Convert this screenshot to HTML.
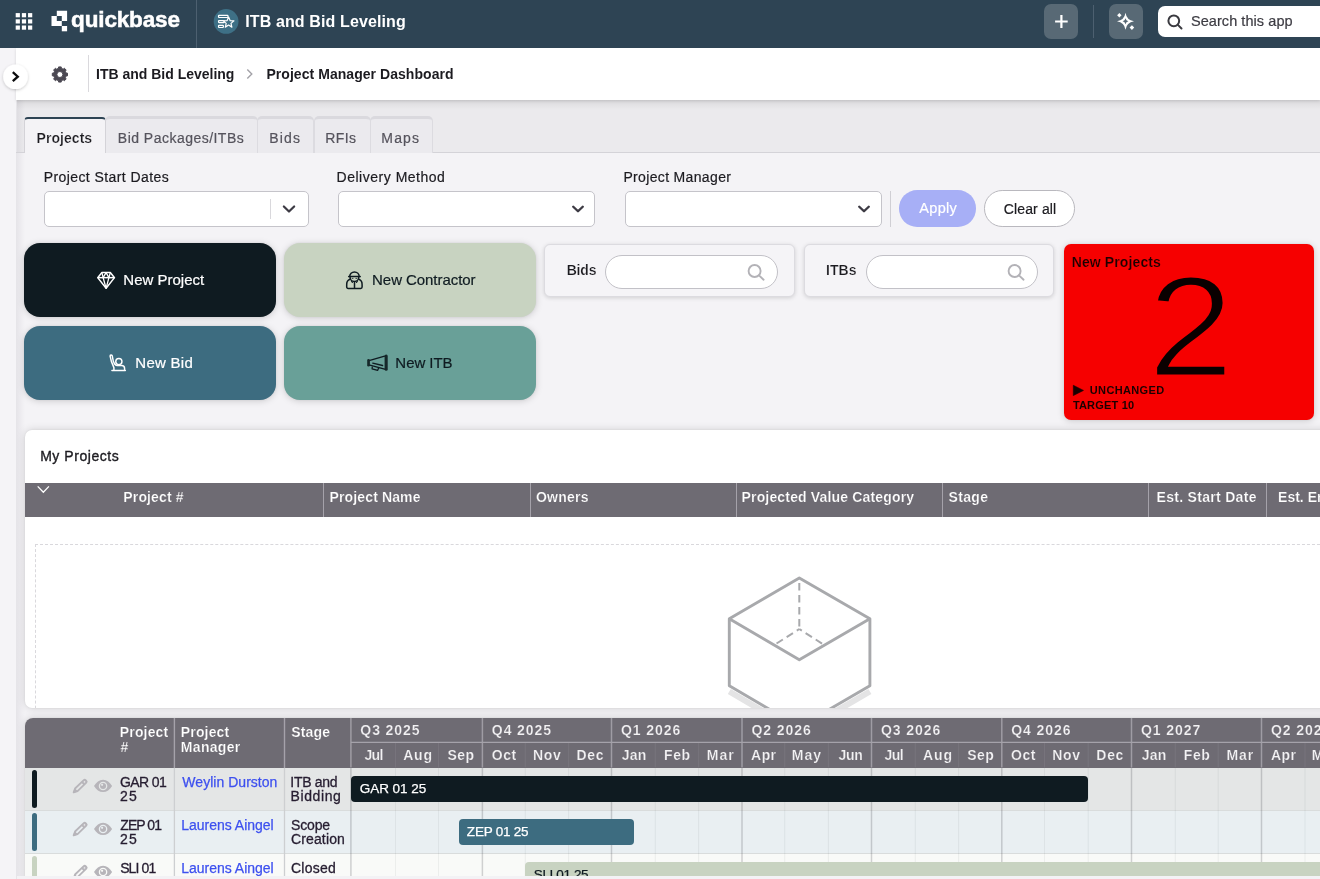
<!DOCTYPE html>
<html lang="en"><head><meta charset="utf-8"><title>Project Manager Dashboard</title>
<style>
*{box-sizing:border-box;margin:0;padding:0}
html,body{width:1320px;height:879px;overflow:hidden;background:#f4f3f6;font-family:"Liberation Sans", sans-serif;}
.g{position:absolute;left:0;top:0;width:0;height:0}
.a{position:absolute}
.t{position:absolute;white-space:pre;line-height:1;will-change:transform}
svg{position:absolute;overflow:visible}
</style></head>
<body>
<header id="app-header" class="g">
<div class="a" style="left:16px;top:100px;width:1304px;height:53px;background:#ebeaed"></div>
<div class="a" style="left:16px;top:100px;width:1304px;height:10px;background:linear-gradient(rgba(0,0,0,.07),rgba(0,0,0,0))"></div>
<div class="a" style="left:17px;top:100px;width:8px;height:779px;background:linear-gradient(90deg,rgba(20,10,40,.06),rgba(20,10,40,0))"></div>
<div class="a" style="left:0px;top:48px;width:17px;height:831px;background:#f5f4f7;border-right:1px solid #e6e5e9"></div>
<div class="a" style="left:16px;top:48px;width:1304px;height:52px;background:#fff;box-shadow:0 1px 3px rgba(0,0,0,.13)"></div>
<div class="a" style="left:0px;top:0px;width:1320px;height:48px;background:#2e4454"></div>
<svg style="left:0;top:0" width="200" height="48" fill="#fff"><rect x="15.70" y="13.10" width="4.2" height="4.2"/><rect x="15.70" y="19.30" width="4.2" height="4.2"/><rect x="15.70" y="25.50" width="4.2" height="4.2"/><rect x="21.87" y="13.10" width="4.2" height="4.2"/><rect x="21.87" y="19.30" width="4.2" height="4.2"/><rect x="21.87" y="25.50" width="4.2" height="4.2"/><rect x="28.04" y="13.10" width="4.2" height="4.2"/><rect x="28.04" y="19.30" width="4.2" height="4.2"/><rect x="28.04" y="25.50" width="4.2" height="4.2"/><path fill-rule="evenodd" d="M56.8 10.8H67.1V21.1H56.8Z M51.5 15.9H61.8V26H51.5Z"/><rect x="61.8" y="26" width="5.3" height="5.3"/></svg>
<div class="t" style="left:71px;top:8px;padding:0.75px 0 0 0.08px;font-size:22.5px;font-weight:700;color:#fff;letter-spacing:-0.145px;-webkit-text-stroke:.5px #fff;">quickbase</div>
<div class="a" style="left:196px;top:0px;width:1px;height:48px;background:#4d6070"></div>
<svg style="left:213px;top:8px" width="27" height="27"><circle cx="13.100" cy="13.450" r="12.400" fill="#3e7086"/><g fill="none" stroke="#fff" stroke-width="1.200"><rect x="5.550" y="7.300" width="9.400" height="2.200" rx=".5"/><rect x="5.550" y="12.600" width="5.900" height="2" rx=".5"/><rect x="5.550" y="17.300" width="4.800" height="2.200" rx=".5"/><path d="M15.60 9.00L17.07 12.58L20.93 12.87L17.98 15.37L18.89 19.13L15.60 17.10L12.31 19.13L13.22 15.37L10.27 12.87L14.13 12.58Z" fill="#3e7086" stroke-linejoin="round"/></g></svg>
<div class="t" style="left:245px;top:13px;padding:0.66px 0 0 0.23px;font-size:16px;font-weight:700;color:#fff;letter-spacing:0.121px;">ITB and Bid Leveling</div>
<div class="a" style="left:1043.6px;top:4px;width:34.5px;height:34.8px;background:#586975;border-radius:7px"></div>
<svg style="left:1043.5px;top:4px" width="35" height="35"><path d="M17.4 11v13M11.100 17.500h12.600" stroke="#fff" stroke-width="2.200" fill="none"/></svg>
<div class="a" style="left:1093px;top:5px;width:1px;height:33px;background:#4d6070"></div>
<div class="a" style="left:1108.8px;top:4px;width:34.5px;height:34.8px;background:#586975;border-radius:7px"></div>
<svg style="left:1108.1px;top:4px" width="35" height="35" fill="#fff"><path fill-rule="evenodd" transform="translate(17.5 17.25)" d="M0 -8.500Q1.100 -1.100 8.500 0Q1.100 1.100 0 8.500Q-1.100 1.100 -8.500 0Q-1.100 -1.100 0 -8.500Z M0 -2.900Q.5 -.5 2.900 0Q.5 .5 0 2.900Q-.5 .5 -2.900 0Q-.5 -.5 0 -2.900Z"/><path d="M11.350 8.900l2.200 2.250-2.200 2.250-2.200-2.250z"/><path d="M23.900 21.200l2.300 2.400-2.300 2.400-2.300-2.400z"/></svg>
<div class="a" style="left:1158px;top:6px;width:180px;height:31px;background:#fff;border-radius:7px"></div>
<svg style="left:1165px;top:12px" width="20" height="20" fill="none" stroke="#3a3a40" stroke-width="2"><circle cx="8.8" cy="8.800" r="5.4"/><path d="M12.900 12.900l3.600 3.600" stroke-linecap="round"/></svg>
<div class="t" style="left:1190px;top:13px;padding:0.83px 0 0 0.94px;font-size:14.5px;font-weight:400;color:#3c3b42;letter-spacing:0.065px;-webkit-text-stroke:.2px #3c3b42;">Search this app</div>
<svg style="left:0;top:60px" width="32" height="32"><defs><filter id="sh" x="-50%" y="-50%" width="200%" height="200%"><feDropShadow dx="0" dy="1" stdDeviation="1.5" flood-opacity=".22"/></filter></defs><circle cx="15.500" cy="16.800" r="12.300" fill="#fff" filter="url(#sh)"/><path d="M12.800 12.200l5 4.500-5 4.500" fill="none" stroke="#0c0c0e" stroke-width="2.300"/></svg>
<svg style="left:0;top:48px" width="100" height="52"><path fill-rule="evenodd" fill="#4b4852" stroke="#4b4852" stroke-width="1" stroke-linejoin="round" d="M67.49 25.18L67.49 27.82L66.03 27.97L65.27 29.79L66.20 30.93L64.33 32.80L63.19 31.87L61.37 32.63L61.22 34.09L58.58 34.09L58.43 32.63L56.61 31.87L55.47 32.80L53.60 30.93L54.53 29.79L53.77 27.97L52.31 27.82L52.31 25.18L53.77 25.03L54.53 23.21L53.60 22.07L55.47 20.20L56.61 21.13L58.43 20.37L58.58 18.91L61.22 18.91L61.37 20.37L63.19 21.13L64.33 20.20L66.20 22.07L65.27 23.21L66.03 25.03ZM62.90 26.50A3 3 0 1 0 56.90 26.50A3 3 0 1 0 62.90 26.50Z"/></svg>
<div class="a" style="left:88px;top:55px;width:1px;height:37px;background:#dad9dd"></div>
<div class="t" style="left:96px;top:66px;padding:0.75px 0 0 0.06px;font-size:14px;font-weight:700;color:#1c1b20;letter-spacing:-0.004px;">ITB and Bid Leveling</div>
<svg style="left:244px;top:68px" width="12" height="12"><path d="M3.300 1.500l4.500 4.500-4.500 4.500" fill="none" stroke="#a3a2a8" stroke-width="1.4"/></svg>
<div class="t" style="left:266px;top:66px;padding:0.75px 0 0 0.46px;font-size:14px;font-weight:700;color:#1c1b20;letter-spacing:0.047px;">Project Manager Dashboard</div>
</header>
<nav id="dashboard-filters" class="g">
<div class="a" style="left:16px;top:152px;width:1304px;height:1px;background:#d4d3d8"></div>
<div class="a" style="left:105px;top:116px;width:153.3px;height:37px;background:#ebeaee;border:1px solid #dcdbe0;border-top:3px solid #dad9de;border-bottom:none;border-radius:5px 5px 0 0"></div>
<div class="a" style="left:257.3px;top:116px;width:57.19999999999999px;height:37px;background:#ebeaee;border:1px solid #dcdbe0;border-top:3px solid #dad9de;border-bottom:none;border-radius:5px 5px 0 0"></div>
<div class="a" style="left:313.5px;top:116px;width:57.0px;height:37px;background:#ebeaee;border:1px solid #dcdbe0;border-top:3px solid #dad9de;border-bottom:none;border-radius:5px 5px 0 0"></div>
<div class="a" style="left:369.5px;top:116px;width:63.5px;height:37px;background:#ebeaee;border:1px solid #dcdbe0;border-top:3px solid #dad9de;border-bottom:none;border-radius:5px 5px 0 0"></div>
<div class="a" style="left:24px;top:117px;width:81.5px;height:36px;background:#f4f3f6;border:1px solid #d4d3d8;border-bottom:none;border-top:2px solid #2e4454;border-radius:4px 4px 0 0"></div>
<div class="t" style="left:36px;top:131px;padding:0.05px 0 0 0.56px;font-size:14px;font-weight:700;color:#1c1b20;letter-spacing:0.052px;-webkit-text-stroke:0.22px #f4f3f6;">Projects</div>
<div class="t" style="left:117px;top:131px;padding:0.05px 0 0 0.85px;font-size:14px;font-weight:400;color:#55535c;letter-spacing:0.474px;-webkit-text-stroke:.2px #55535c;">Bid Packages/ITBs</div>
<div class="t" style="left:269px;top:131px;padding:0.05px 0 0 0.35px;font-size:14px;font-weight:400;color:#55535c;letter-spacing:1.140px;-webkit-text-stroke:.2px #55535c;">Bids</div>
<div class="t" style="left:325px;top:131px;padding:0.05px 0 0 0.35px;font-size:14px;font-weight:400;color:#55535c;letter-spacing:0.368px;-webkit-text-stroke:.2px #55535c;">RFIs</div>
<div class="t" style="left:381px;top:131px;padding:0.05px 0 0 0.35px;font-size:14px;font-weight:400;color:#55535c;letter-spacing:1.140px;-webkit-text-stroke:.2px #55535c;">Maps</div>
<div class="t" style="left:43px;top:169px;padding:0.75px 0 0 0.65px;font-size:14px;font-weight:400;color:#1c1b20;letter-spacing:0.420px;-webkit-text-stroke:.2px #1c1b20;">Project Start Dates</div>
<div class="t" style="left:336px;top:169px;padding:0.75px 0 0 0.55px;font-size:14px;font-weight:400;color:#1c1b20;letter-spacing:0.514px;-webkit-text-stroke:.2px #1c1b20;">Delivery Method</div>
<div class="t" style="left:623px;top:169px;padding:0.75px 0 0 0.45px;font-size:14px;font-weight:400;color:#1c1b20;letter-spacing:0.340px;-webkit-text-stroke:.2px #1c1b20;">Project Manager</div>
<div class="a" style="left:44.3px;top:191px;width:264.7px;height:35.6px;background:#fff;border:1px solid #c5c4ca;border-radius:5px"></div>
<div class="a" style="left:337.5px;top:191px;width:257.6px;height:35.6px;background:#fff;border:1px solid #c5c4ca;border-radius:5px"></div>
<div class="a" style="left:624.5px;top:191px;width:257px;height:35.6px;background:#fff;border:1px solid #c5c4ca;border-radius:5px"></div>
<div class="a" style="left:270.3px;top:199px;width:1px;height:20px;background:#d9d8dc"></div>
<svg style="left:279.2px;top:198.6px" width="20" height="20"><path d="M4.85 7.45L10 12.55L15.15 7.45" fill="none" stroke="#3d3b44" stroke-width="2.2" stroke-linecap="round" stroke-linejoin="round"/></svg>
<svg style="left:568px;top:199.4px" width="20" height="20"><path d="M5.25 7.75L10 12.25L14.75 7.75" fill="none" stroke="#3d3b44" stroke-width="2.4" stroke-linecap="round" stroke-linejoin="round"/></svg>
<svg style="left:854.2px;top:199.4px" width="20" height="20"><path d="M5.25 7.75L10 12.25L14.75 7.75" fill="none" stroke="#3d3b44" stroke-width="2.4" stroke-linecap="round" stroke-linejoin="round"/></svg>
<div class="a" style="left:890px;top:191px;width:1px;height:36px;background:#d0cfd4"></div>
<div class="a" style="left:899.2px;top:190.3px;width:76.8px;height:36.4px;background:#a7aff6;border-radius:18.2px"></div>
<div class="t" style="left:919px;top:201px;padding:0.13px 0 0 0.27px;font-size:14.5px;font-weight:400;color:#fff;letter-spacing:0.321px;-webkit-text-stroke:.2px #fff;">Apply</div>
<div class="a" style="left:984px;top:190.3px;width:90.7px;height:36.4px;background:#fff;border:1px solid #b9b8be;border-radius:18.2px"></div>
<div class="t" style="left:1003px;top:201px;padding:0.55px 0 0 0.79px;font-size:14px;font-weight:400;color:#1c1b20;letter-spacing:0.137px;-webkit-text-stroke:.2px #1c1b20;">Clear all</div>
</nav>
<section id="dashboard-actions" class="g">
<div class="a" style="left:24px;top:243.2px;width:252px;height:73.8px;background:#0f1b21;border-radius:16px;box-shadow:0 1px 7px rgba(0,0,0,.17),0 0 2px rgba(0,0,0,.07)"></div>
<div class="a" style="left:284px;top:243.2px;width:252px;height:73.8px;background:#c8d3c1;border-radius:16px;box-shadow:0 1px 7px rgba(0,0,0,.17),0 0 2px rgba(0,0,0,.07)"></div>
<div class="a" style="left:24px;top:326px;width:252px;height:73.8px;background:#3d6c80;border-radius:16px;box-shadow:0 1px 7px rgba(0,0,0,.17),0 0 2px rgba(0,0,0,.07)"></div>
<div class="a" style="left:284px;top:326px;width:252px;height:73.8px;background:#69a098;border-radius:16px;box-shadow:0 1px 7px rgba(0,0,0,.17),0 0 2px rgba(0,0,0,.07)"></div>
<div class="t" style="left:123px;top:272px;padding:0.30px 0 0 0.37px;font-size:15px;font-weight:400;color:#fff;letter-spacing:-0.002px;-webkit-text-stroke:.2px #fff;">New Project</div>
<div class="t" style="left:372px;top:272px;padding:0.30px 0 0 0.07px;font-size:15px;font-weight:400;color:#0f1b21;letter-spacing:-0.056px;-webkit-text-stroke:.2px #0f1b21;">New Contractor</div>
<div class="t" style="left:135px;top:355px;padding:0.10px 0 0 0.37px;font-size:15px;font-weight:400;color:#fff;letter-spacing:0.257px;-webkit-text-stroke:.2px #fff;">New Bid</div>
<div class="t" style="left:395px;top:355px;padding:0.10px 0 0 0.37px;font-size:15px;font-weight:400;color:#0f1b21;letter-spacing:-0.048px;-webkit-text-stroke:.2px #0f1b21;">New ITB</div>
<svg style="left:97px;top:272px" width="19" height="18" fill="none" stroke="#fff" stroke-width="1.500" stroke-linejoin="round"><path d="M4.900 .6h8.400l4.200 5.050L9.100 16.300 .7 5.650z"/><path d="M.7 5.650h16.800"/><path d="M4.900 .6L6.100 5.650 9.100 16.300 11.900 5.650 13.300 .6" stroke-width="1.300"/><path d="M6.100 5.650L9.100 .6l2.800 5.050" stroke-width="1.300"/></svg>
<svg style="left:345px;top:271px" width="19" height="18" fill="none" stroke="#0f1b21" stroke-width="1.500" stroke-linejoin="round" stroke-linecap="round"><path d="M4.700 5.500A4.750 4.600 0 0 1 14.200 5.500"/><path d="M3.800 5.500H15.100" stroke-width="1.700"/><path d="M5.100 5.700v.5a4.300 4.300 0 0 0 8.600 0v-.5"/><path d="M4.900 8.300C2.800 9.100 1.700 10.900 1.700 13.400V16a1.400 1.400 0 0 0 1.400 1.400H15.700a1.400 1.400 0 0 0 1.400-1.400V13.400C17.100 10.900 16 9.100 13.900 8.300"/><path d="M9.500 10.700V17.200"/><path d="M6.500 10.100l.9 1.400M12.400 10.100l-.9 1.400" stroke-width="1.100"/><path d="M7.200 7.400h.8M10.900 7.400h.8" stroke-width=".8"/></svg>
<svg style="left:109px;top:354px" width="19" height="18" fill="none" stroke="#fff" stroke-width="1.450" stroke-linejoin="round" stroke-linecap="round"><path d="M4.900 16.300V13.600C3.200 10 1.600 6 1.100 2.200C1 .8 3 .5 3.300 2C3.800 6 4.600 8.500 5.600 10C6.200 10.900 6.900 11.400 8 11.500H12.600C14.600 11.500 15.600 12.800 15.600 14.400V16.300"/><path d="M3 16.500H16.300" stroke-width="1.600"/><circle cx="9.850" cy="7.600" r="3.100"/></svg>
<svg style="left:367px;top:354px" width="22" height="18" fill="none" stroke="#0f1b21" stroke-width="1.300" stroke-linejoin="round" stroke-linecap="round"><rect x="17.600" y=".6" width="3.100" height="16.200" rx="1.500" fill="#16282a" stroke="none"/><rect x=".2" y="5.100" width="2.700" height="7.400" rx="1.300" fill="#16282a" stroke="none"/><path d="M2.900 6.400L17.600 2.100M2.900 11.100L17.600 15.200M5.750 9.200L15.600 11.500M5.300 12.700L5.100 14.800L10.700 16.400L11.500 14.200"/></svg>
<div class="a" style="left:544.3px;top:243.5px;width:250.5px;height:53px;background:#f5f4f7;border:1px solid #dcdbe0;border-radius:6px;box-shadow:0 1px 4px rgba(0,0,0,.15)"></div>
<div class="a" style="left:803.7px;top:243.5px;width:250.8px;height:53px;background:#f5f4f7;border:1px solid #dcdbe0;border-radius:6px;box-shadow:0 1px 4px rgba(0,0,0,.15)"></div>
<div class="t" style="left:566px;top:262px;padding:0.55px 0 0 0.66px;font-size:14px;font-weight:700;color:#1c1b20;letter-spacing:-0.176px;-webkit-text-stroke:0.22px #f5f4f7;">Bids</div>
<div class="t" style="left:826px;top:262px;padding:0.55px 0 0 0.06px;font-size:14px;font-weight:700;color:#1c1b20;letter-spacing:0.058px;-webkit-text-stroke:0.22px #f5f4f7;">ITBs</div>
<div class="a" style="left:604.9px;top:254.8px;width:173.1px;height:34.7px;background:#fff;border:1px solid #c2c1c7;border-radius:17.5px"></div>
<div class="a" style="left:865.5px;top:254.8px;width:172.4px;height:34.7px;background:#fff;border:1px solid #c2c1c7;border-radius:17.5px"></div>
<svg style="left:746.3px;top:261.7px" width="20" height="20" fill="none" stroke="#b3b2b7" stroke-width="1.900"><circle cx="8.600" cy="9" r="6"/><path d="M13 13.400l4.600 4.300" stroke-linecap="round"/></svg>
<svg style="left:1006px;top:261.7px" width="20" height="20" fill="none" stroke="#b3b2b7" stroke-width="1.900"><circle cx="8.600" cy="9" r="6"/><path d="M13 13.400l4.600 4.300" stroke-linecap="round"/></svg>
<div class="a" style="left:1064.1px;top:243.5px;width:250.2px;height:176px;background:#f60000;border-radius:7px;box-shadow:0 1px 7px rgba(0,0,0,.17),0 0 2px rgba(0,0,0,.07)"></div>
<div class="t" style="left:1071px;top:255px;padding:0.25px 0 0 0.76px;font-size:14px;font-weight:700;color:#1c0000;letter-spacing:0.108px;-webkit-text-stroke:0.22px #f60000;">New Projects</div>
<div class="t" style="left:1150px;top:255px;padding:0.35px 0 0 0.81px;font-size:143px;font-weight:400;color:#0a0000;letter-spacing:0.000px;-webkit-text-stroke:3px #f60000;transform:scaleX(1.08);transform-origin:50% 50%;">2</div>
<svg style="left:1073.4px;top:384.700px" width="11" height="11"><path d="M.3 .3L10.500 5.400L.3 10.600z" fill="#1a0000" stroke="#1a0000" stroke-width=".6" stroke-linejoin="round"/></svg>
<div class="t" style="left:1089px;top:384px;padding:0.99px 0 0 0.84px;font-size:11px;font-weight:700;color:#1c0000;letter-spacing:0.353px;">UNCHANGED</div>
<div class="t" style="left:1072px;top:399px;padding:0.99px 0 0 0.88px;font-size:11px;font-weight:700;color:#1c0000;letter-spacing:0.198px;">TARGET 10</div>
</section>
<section id="my-projects" class="g">
<div class="a" style="left:25px;top:429.5px;width:1310px;height:278.5px;background:#fff;border-radius:7px;box-shadow:0 0 8px rgba(0,0,0,.15),0 0 2px rgba(0,0,0,.08)"></div>
<div class="t" style="left:40px;top:448px;padding:0.95px 0 0 0.15px;font-size:14px;font-weight:400;color:#1c1b20;letter-spacing:0.553px;-webkit-text-stroke:.35px #1c1b20;">My Projects</div>
<div class="a" style="left:25px;top:483px;width:1295px;height:34px;background:#6e6b73"></div>
<div class="a" style="left:323.0px;top:483px;width:1px;height:34px;background:#a5a2aa"></div>
<div class="a" style="left:529.5px;top:483px;width:1px;height:34px;background:#a5a2aa"></div>
<div class="a" style="left:736.0px;top:483px;width:1px;height:34px;background:#a5a2aa"></div>
<div class="a" style="left:942.0px;top:483px;width:1px;height:34px;background:#a5a2aa"></div>
<div class="a" style="left:1148.0px;top:483px;width:1px;height:34px;background:#a5a2aa"></div>
<div class="a" style="left:1265.5px;top:483px;width:1px;height:34px;background:#a5a2aa"></div>
<svg style="left:36px;top:484px" width="16" height="12"><path d="M1.700 2.400L7.350 8.300L12.900 2.400" fill="none" stroke="#fff" stroke-width="1.300"/></svg>
<div class="t" style="left:123px;top:489px;padding:0.95px 0 0 0.36px;font-size:14px;font-weight:700;color:#fff;letter-spacing:0.128px;-webkit-text-stroke:0.22px #6e6b73;">Project #</div>
<div class="t" style="left:329px;top:489px;padding:0.95px 0 0 0.56px;font-size:14px;font-weight:700;color:#fff;letter-spacing:0.130px;-webkit-text-stroke:0.22px #6e6b73;">Project Name</div>
<div class="t" style="left:535px;top:489px;padding:0.95px 0 0 0.93px;font-size:14px;font-weight:700;color:#fff;letter-spacing:0.259px;-webkit-text-stroke:0.22px #6e6b73;">Owners</div>
<div class="t" style="left:741px;top:489px;padding:0.95px 0 0 0.56px;font-size:14px;font-weight:700;color:#fff;letter-spacing:0.160px;-webkit-text-stroke:0.22px #6e6b73;">Projected Value Category</div>
<div class="t" style="left:948px;top:489px;padding:0.95px 0 0 0.60px;font-size:14px;font-weight:700;color:#fff;letter-spacing:0.314px;-webkit-text-stroke:0.22px #6e6b73;">Stage</div>
<div class="t" style="left:1156px;top:489px;padding:0.95px 0 0 0.56px;font-size:14px;font-weight:700;color:#fff;letter-spacing:0.301px;-webkit-text-stroke:0.22px #6e6b73;">Est. Start Date</div>
<div class="t" style="left:1278px;top:489px;padding:0.95px 0 0 0.06px;font-size:14px;font-weight:700;color:#fff;letter-spacing:0.014px;-webkit-text-stroke:0.22px #6e6b73;">Est. End Date</div>
<div class="a" style="left:0;top:0;width:1320px;height:708px;overflow:hidden">
<div class="a" style="left:35px;top:544px;width:1300px;height:200px;border:1px dashed #d9d8dc;border-right:none;border-bottom:none"></div>
<svg style="left:700px;top:560px" width="200" height="148" viewBox="700 560 200 148" fill="none"><path d="M729.3 691.500L799.3 732.500L869.900 691.500" stroke="#e4e4e5" stroke-width="6" stroke-linejoin="round" stroke-linecap="butt"/><path d="M799.3 577.900L869.900 618.800V685.800L799.3 726.800L729.3 685.800V618.800Z" stroke="#a8a9ac" stroke-width="2.900" stroke-linejoin="round" fill="#fff"/><path d="M729.3 618.800L799.3 659.800L869.900 618.800" stroke="#a8a9ac" stroke-width="2.900" stroke-linejoin="round"/><path d="M799.3 583V629" stroke="#a8a9ac" stroke-width="2" stroke-dasharray="7.500 4.500"/><path d="M799.3 629L775 644.500M799.3 629L823.500 644.500" stroke="#a8a9ac" stroke-width="2" stroke-dasharray="3 4.500 7.500 4.500 7.500 4.500"/></svg>
</div>
</section>
<section id="project-timeline" class="g">
<div class="a" style="left:25px;top:718px;width:1310px;height:200px;background:#fff;border-radius:8px 0 0 0;box-shadow:0 0 8px rgba(0,0,0,.15),0 0 2px rgba(0,0,0,.08);overflow:hidden"></div>
<div class="a" style="left:25px;top:718px;width:1295px;height:49.7px;background:#6e6b73;border-radius:8px 0 0 0"></div>
<div class="a" style="left:25px;top:767.7px;width:1295px;height:42.89999999999998px;background:#e4e6e6"></div>
<div class="a" style="left:25px;top:810.6px;width:1295px;height:42.89999999999998px;background:#e9eff2"></div>
<div class="a" style="left:25px;top:853.5px;width:1295px;height:42.5px;background:#f9faf8"></div>
<div class="a" style="left:25px;top:810.1px;width:1295px;height:1px;background:#d9dcdc"></div>
<div class="a" style="left:25px;top:853.0px;width:1295px;height:1px;background:#d9dcdc"></div>
<svg style="left:0;top:0" width="1320" height="879" fill="none"><path d="M350.90 767.60L350.90 879.00" stroke="rgba(40,40,50,.2)" stroke-width="1.5"/><path d="M350.90 718.00L350.90 767.60" stroke="#9f9ca4" stroke-width="1.5"/><path d="M395.50 767.60L395.50 879.00" stroke="rgba(20,30,40,.055)" stroke-width="1.1"/><path d="M395.50 742.50L395.50 767.60" stroke="#77747c" stroke-width="1.1"/><path d="M438.50 767.60L438.50 879.00" stroke="rgba(20,30,40,.055)" stroke-width="1.1"/><path d="M438.50 742.50L438.50 767.60" stroke="#77747c" stroke-width="1.1"/><path d="M482.40 767.60L482.40 879.00" stroke="rgba(40,40,50,.2)" stroke-width="1.5"/><path d="M482.40 718.00L482.40 767.60" stroke="#9f9ca4" stroke-width="1.5"/><path d="M525.30 767.60L525.30 879.00" stroke="rgba(20,30,40,.055)" stroke-width="1.1"/><path d="M525.30 742.50L525.30 767.60" stroke="#77747c" stroke-width="1.1"/><path d="M568.60 767.60L568.60 879.00" stroke="rgba(20,30,40,.055)" stroke-width="1.1"/><path d="M568.60 742.50L568.60 767.60" stroke="#77747c" stroke-width="1.1"/><path d="M611.50 767.60L611.50 879.00" stroke="rgba(40,40,50,.2)" stroke-width="1.5"/><path d="M611.50 718.00L611.50 767.60" stroke="#9f9ca4" stroke-width="1.5"/><path d="M655.30 767.60L655.30 879.00" stroke="rgba(20,30,40,.055)" stroke-width="1.1"/><path d="M655.30 742.50L655.30 767.60" stroke="#77747c" stroke-width="1.1"/><path d="M698.60 767.60L698.60 879.00" stroke="rgba(20,30,40,.055)" stroke-width="1.1"/><path d="M698.60 742.50L698.60 767.60" stroke="#77747c" stroke-width="1.1"/><path d="M742.00 767.60L742.00 879.00" stroke="rgba(40,40,50,.2)" stroke-width="1.5"/><path d="M742.00 718.00L742.00 767.60" stroke="#9f9ca4" stroke-width="1.5"/><path d="M784.70 767.60L784.70 879.00" stroke="rgba(20,30,40,.055)" stroke-width="1.1"/><path d="M784.70 742.50L784.70 767.60" stroke="#77747c" stroke-width="1.1"/><path d="M828.40 767.60L828.40 879.00" stroke="rgba(20,30,40,.055)" stroke-width="1.1"/><path d="M828.40 742.50L828.40 767.60" stroke="#77747c" stroke-width="1.1"/><path d="M871.50 767.60L871.50 879.00" stroke="rgba(40,40,50,.2)" stroke-width="1.5"/><path d="M871.50 718.00L871.50 767.60" stroke="#9f9ca4" stroke-width="1.5"/><path d="M915.30 767.60L915.30 879.00" stroke="rgba(20,30,40,.055)" stroke-width="1.1"/><path d="M915.30 742.50L915.30 767.60" stroke="#77747c" stroke-width="1.1"/><path d="M958.60 767.60L958.60 879.00" stroke="rgba(20,30,40,.055)" stroke-width="1.1"/><path d="M958.60 742.50L958.60 767.60" stroke="#77747c" stroke-width="1.1"/><path d="M1001.80 767.60L1001.80 879.00" stroke="rgba(40,40,50,.2)" stroke-width="1.5"/><path d="M1001.80 718.00L1001.80 767.60" stroke="#9f9ca4" stroke-width="1.5"/><path d="M1044.50 767.60L1044.50 879.00" stroke="rgba(20,30,40,.055)" stroke-width="1.1"/><path d="M1044.50 742.50L1044.50 767.60" stroke="#77747c" stroke-width="1.1"/><path d="M1088.20 767.60L1088.20 879.00" stroke="rgba(20,30,40,.055)" stroke-width="1.1"/><path d="M1088.20 742.50L1088.20 767.60" stroke="#77747c" stroke-width="1.1"/><path d="M1131.50 767.60L1131.50 879.00" stroke="rgba(40,40,50,.2)" stroke-width="1.5"/><path d="M1131.50 718.00L1131.50 767.60" stroke="#9f9ca4" stroke-width="1.5"/><path d="M1175.30 767.60L1175.30 879.00" stroke="rgba(20,30,40,.055)" stroke-width="1.1"/><path d="M1175.30 742.50L1175.30 767.60" stroke="#77747c" stroke-width="1.1"/><path d="M1218.20 767.60L1218.20 879.00" stroke="rgba(20,30,40,.055)" stroke-width="1.1"/><path d="M1218.20 742.50L1218.20 767.60" stroke="#77747c" stroke-width="1.1"/><path d="M1261.50 767.60L1261.50 879.00" stroke="rgba(40,40,50,.2)" stroke-width="1.5"/><path d="M1261.50 718.00L1261.50 767.60" stroke="#9f9ca4" stroke-width="1.5"/><path d="M1305.00 767.60L1305.00 879.00" stroke="rgba(20,30,40,.055)" stroke-width="1.1"/><path d="M1305.00 742.50L1305.00 767.60" stroke="#77747c" stroke-width="1.1"/><path d="M350.90 742.40L1320.00 742.40" stroke="#a5a2aa" stroke-width="1.3"/><path d="M174.40 718.00L174.40 767.60" stroke="#a5a2aa" stroke-width="1.4"/><path d="M174.40 767.60L174.40 879.00" stroke="#cdcfd1" stroke-width="1.3"/><path d="M284.50 718.00L284.50 767.60" stroke="#a5a2aa" stroke-width="1.4"/><path d="M284.50 767.60L284.50 879.00" stroke="#cdcfd1" stroke-width="1.3"/></svg>
<div class="t" style="left:364px;top:747px;padding:0.75px 0 0 0.39px;font-size:14px;font-weight:700;color:#f3f2f4;letter-spacing:-0.612px;-webkit-text-stroke:0.22px #6e6b73;">Jul</div>
<div class="t" style="left:360px;top:723px;padding:0.35px 0 0 0.33px;font-size:14px;font-weight:700;color:#f3f2f4;letter-spacing:0.909px;-webkit-text-stroke:0.22px #6e6b73;">Q3 2025</div>
<div class="t" style="left:403px;top:747px;padding:0.75px 0 0 0.15px;font-size:14px;font-weight:700;color:#f3f2f4;letter-spacing:0.836px;-webkit-text-stroke:0.22px #6e6b73;">Aug</div>
<div class="t" style="left:447px;top:747px;padding:0.75px 0 0 0.60px;font-size:14px;font-weight:700;color:#f3f2f4;letter-spacing:0.401px;-webkit-text-stroke:0.22px #6e6b73;">Sep</div>
<div class="t" style="left:491px;top:747px;padding:0.75px 0 0 0.78px;font-size:14px;font-weight:700;color:#f3f2f4;letter-spacing:0.504px;-webkit-text-stroke:0.22px #6e6b73;">Oct</div>
<div class="t" style="left:491px;top:723px;padding:0.35px 0 0 0.83px;font-size:14px;font-weight:700;color:#f3f2f4;letter-spacing:0.909px;-webkit-text-stroke:0.22px #6e6b73;">Q4 2025</div>
<div class="t" style="left:532px;top:747px;padding:0.75px 0 0 0.91px;font-size:14px;font-weight:700;color:#f3f2f4;letter-spacing:0.675px;-webkit-text-stroke:0.22px #6e6b73;">Nov</div>
<div class="t" style="left:576px;top:747px;padding:0.75px 0 0 0.56px;font-size:14px;font-weight:700;color:#f3f2f4;letter-spacing:0.682px;-webkit-text-stroke:0.22px #6e6b73;">Dec</div>
<div class="t" style="left:621px;top:747px;padding:0.75px 0 0 0.84px;font-size:14px;font-weight:700;color:#f3f2f4;letter-spacing:0.128px;-webkit-text-stroke:0.22px #6e6b73;">Jan</div>
<div class="t" style="left:620px;top:723px;padding:0.35px 0 0 0.93px;font-size:14px;font-weight:700;color:#f3f2f4;letter-spacing:0.928px;-webkit-text-stroke:0.22px #6e6b73;">Q1 2026</div>
<div class="t" style="left:664px;top:747px;padding:0.75px 0 0 0.06px;font-size:14px;font-weight:700;color:#f3f2f4;letter-spacing:0.561px;-webkit-text-stroke:0.22px #6e6b73;">Feb</div>
<div class="t" style="left:706px;top:747px;padding:0.75px 0 0 0.86px;font-size:14px;font-weight:700;color:#f3f2f4;letter-spacing:0.926px;-webkit-text-stroke:0.22px #6e6b73;">Mar</div>
<div class="t" style="left:751px;top:747px;padding:0.75px 0 0 0.10px;font-size:14px;font-weight:700;color:#f3f2f4;letter-spacing:0.425px;-webkit-text-stroke:0.22px #6e6b73;">Apr</div>
<div class="t" style="left:751px;top:723px;padding:0.35px 0 0 0.43px;font-size:14px;font-weight:700;color:#f3f2f4;letter-spacing:0.928px;-webkit-text-stroke:0.22px #6e6b73;">Q2 2026</div>
<div class="t" style="left:791px;top:747px;padding:0.75px 0 0 0.76px;font-size:14px;font-weight:700;color:#f3f2f4;letter-spacing:1.039px;-webkit-text-stroke:0.22px #6e6b73;">May</div>
<div class="t" style="left:838px;top:747px;padding:0.75px 0 0 0.39px;font-size:14px;font-weight:700;color:#f3f2f4;letter-spacing:-0.255px;-webkit-text-stroke:0.22px #6e6b73;">Jun</div>
<div class="t" style="left:884px;top:747px;padding:0.75px 0 0 0.59px;font-size:14px;font-weight:700;color:#f3f2f4;letter-spacing:-0.612px;-webkit-text-stroke:0.22px #6e6b73;">Jul</div>
<div class="t" style="left:880px;top:723px;padding:0.35px 0 0 0.93px;font-size:14px;font-weight:700;color:#f3f2f4;letter-spacing:0.928px;-webkit-text-stroke:0.22px #6e6b73;">Q3 2026</div>
<div class="t" style="left:923px;top:747px;padding:0.75px 0 0 0.10px;font-size:14px;font-weight:700;color:#f3f2f4;letter-spacing:0.836px;-webkit-text-stroke:0.22px #6e6b73;">Aug</div>
<div class="t" style="left:967px;top:747px;padding:0.75px 0 0 0.35px;font-size:14px;font-weight:700;color:#f3f2f4;letter-spacing:0.401px;-webkit-text-stroke:0.22px #6e6b73;">Sep</div>
<div class="t" style="left:1011px;top:747px;padding:0.75px 0 0 0.08px;font-size:14px;font-weight:700;color:#f3f2f4;letter-spacing:0.504px;-webkit-text-stroke:0.22px #6e6b73;">Oct</div>
<div class="t" style="left:1011px;top:723px;padding:0.35px 0 0 0.23px;font-size:14px;font-weight:700;color:#f3f2f4;letter-spacing:0.928px;-webkit-text-stroke:0.22px #6e6b73;">Q4 2026</div>
<div class="t" style="left:1052px;top:747px;padding:0.75px 0 0 0.31px;font-size:14px;font-weight:700;color:#f3f2f4;letter-spacing:0.675px;-webkit-text-stroke:0.22px #6e6b73;">Nov</div>
<div class="t" style="left:1096px;top:747px;padding:0.75px 0 0 0.36px;font-size:14px;font-weight:700;color:#f3f2f4;letter-spacing:0.682px;-webkit-text-stroke:0.22px #6e6b73;">Dec</div>
<div class="t" style="left:1141px;top:747px;padding:0.75px 0 0 0.84px;font-size:14px;font-weight:700;color:#f3f2f4;letter-spacing:0.128px;-webkit-text-stroke:0.22px #6e6b73;">Jan</div>
<div class="t" style="left:1140px;top:723px;padding:0.35px 0 0 0.93px;font-size:14px;font-weight:700;color:#f3f2f4;letter-spacing:0.947px;-webkit-text-stroke:0.22px #6e6b73;">Q1 2027</div>
<div class="t" style="left:1183px;top:747px;padding:0.75px 0 0 0.86px;font-size:14px;font-weight:700;color:#f3f2f4;letter-spacing:0.561px;-webkit-text-stroke:0.22px #6e6b73;">Feb</div>
<div class="t" style="left:1226px;top:747px;padding:0.75px 0 0 0.41px;font-size:14px;font-weight:700;color:#f3f2f4;letter-spacing:0.926px;-webkit-text-stroke:0.22px #6e6b73;">Mar</div>
<div class="t" style="left:1271px;top:747px;padding:0.75px 0 0 0.00px;font-size:14px;font-weight:700;color:#f3f2f4;letter-spacing:0.425px;-webkit-text-stroke:0.22px #6e6b73;">Apr</div>
<div class="t" style="left:1270px;top:723px;padding:0.35px 0 0 0.93px;font-size:14px;font-weight:700;color:#f3f2f4;letter-spacing:0.947px;-webkit-text-stroke:0.22px #6e6b73;">Q2 2027</div>
<div class="t" style="left:1311px;top:747px;padding:0.75px 0 0 0.86px;font-size:14px;font-weight:700;color:#f3f2f4;letter-spacing:1.039px;-webkit-text-stroke:0.22px #6e6b73;">May</div>
<div class="t" style="left:119px;top:724px;padding:0.75px 0 0 0.86px;font-size:14px;font-weight:700;color:#fff;letter-spacing:0.141px;-webkit-text-stroke:0.22px #6e6b73;">Project</div>
<div class="t" style="left:120px;top:739px;padding:0.85px 0 0 0.56px;font-size:14px;font-weight:700;color:#fff;letter-spacing:0.000px;-webkit-text-stroke:0.22px #6e6b73;">#</div>
<div class="t" style="left:180px;top:724px;padding:0.75px 0 0 0.86px;font-size:14px;font-weight:700;color:#fff;letter-spacing:0.141px;-webkit-text-stroke:0.22px #6e6b73;">Project</div>
<div class="t" style="left:180px;top:739px;padding:0.85px 0 0 0.86px;font-size:14px;font-weight:700;color:#fff;letter-spacing:0.296px;-webkit-text-stroke:0.22px #6e6b73;">Manager</div>
<div class="t" style="left:291px;top:724px;padding:0.75px 0 0 0.20px;font-size:14px;font-weight:700;color:#fff;letter-spacing:0.164px;-webkit-text-stroke:0.22px #6e6b73;">Stage</div>
<div class="a" style="left:32px;top:770.3000000000001px;width:5px;height:37.6px;background:#0f1b21;border-radius:2.500px"></div>
<div class="t" style="left:120px;top:774px;padding:0.85px 0 0 0.10px;font-size:14px;font-weight:400;color:#261d30;letter-spacing:-0.642px;-webkit-text-stroke:.3px #261d30;">GAR 01</div>
<div class="t" style="left:120px;top:788px;padding:0.95px 0 0 0.10px;font-size:14px;font-weight:400;color:#261d30;letter-spacing:1.220px;-webkit-text-stroke:.3px #261d30;">25</div>
<div class="t" style="left:182px;top:774px;padding:0.85px 0 0 0.34px;font-size:14px;font-weight:400;color:#3d50ef;letter-spacing:0.031px;-webkit-text-stroke:.25px #3d50ef;">Weylin Durston</div>
<div class="t" style="left:290px;top:774px;padding:0.85px 0 0 0.31px;font-size:14px;font-weight:400;color:#261d30;letter-spacing:-0.289px;-webkit-text-stroke:.3px #261d30;">ITB and</div>
<div class="t" style="left:290px;top:788px;padding:0.95px 0 0 0.45px;font-size:14px;font-weight:400;color:#261d30;letter-spacing:0.625px;-webkit-text-stroke:.3px #261d30;">Bidding</div>
<svg style="left:72.900px;top:792.70px" width="1" height="1"><g transform="rotate(-44)" stroke="#b7b5ba" fill="none" stroke-width="1.800" stroke-linejoin="round"><path d="M.9 0L4.600 -1.800H16.700a1.300 1.300 0 0 1 1.300 1.300V.5a1.300 1.300 0 0 1-1.300 1.300H4.600Z"/><path d="M1 0L4.200 -1.500V1.500Z" fill="#b7b5ba" stroke-width="1"/><path d="M14 -1.800V1.800" stroke-width="1.600"/><path d="M14.500 -1.300H17.500V1.300H14.500Z" fill="#b7b5ba" stroke="none"/><circle cx="16" cy="0" r=".75" fill="#e6e7e8" stroke="none"/></g></svg>
<svg style="left:93px;top:777.8000000000001px" width="21" height="16"><path fill="#b7b5ba" fill-rule="evenodd" d="M1 8C3.300 4.200 6.300 1.800 10.050 1.800S16.800 4.200 19.100 8C16.800 11.800 13.800 14.100 10.050 14.100S3.300 11.800 1 8ZM14.350 8a4.300 4.300 0 1 0-8.600 0a4.300 4.300 0 1 0 8.600 0Z M13.050 8a3 3 0 1 0-6 0a3 3 0 1 0 6 0Z M10.200 6.800a1.100 1.100 0 1 0-2.200 0a1.100 1.100 0 1 0 2.200 0Z"/></svg>
<div class="a" style="left:32px;top:813.2px;width:5px;height:37.6px;background:#3d6c80;border-radius:2.500px"></div>
<div class="t" style="left:120px;top:817px;padding:0.75px 0 0 0.36px;font-size:14px;font-weight:400;color:#261d30;letter-spacing:-0.972px;-webkit-text-stroke:.3px #261d30;">ZEP 01</div>
<div class="t" style="left:120px;top:831px;padding:0.85px 0 0 0.10px;font-size:14px;font-weight:400;color:#261d30;letter-spacing:1.220px;-webkit-text-stroke:.3px #261d30;">25</div>
<div class="t" style="left:181px;top:817px;padding:0.75px 0 0 0.25px;font-size:14px;font-weight:400;color:#3d50ef;letter-spacing:-0.016px;-webkit-text-stroke:.25px #3d50ef;">Laurens Aingel</div>
<div class="t" style="left:290px;top:817px;padding:0.75px 0 0 0.96px;font-size:14px;font-weight:400;color:#261d30;letter-spacing:-0.135px;-webkit-text-stroke:.3px #261d30;">Scope</div>
<div class="t" style="left:290px;top:831px;padding:0.85px 0 0 0.89px;font-size:14px;font-weight:400;color:#261d30;letter-spacing:0.158px;-webkit-text-stroke:.3px #261d30;">Creation</div>
<svg style="left:72.900px;top:835.60px" width="1" height="1"><g transform="rotate(-44)" stroke="#b7b5ba" fill="none" stroke-width="1.800" stroke-linejoin="round"><path d="M.9 0L4.600 -1.800H16.700a1.300 1.300 0 0 1 1.300 1.300V.5a1.300 1.300 0 0 1-1.300 1.300H4.600Z"/><path d="M1 0L4.200 -1.500V1.500Z" fill="#b7b5ba" stroke-width="1"/><path d="M14 -1.800V1.800" stroke-width="1.600"/><path d="M14.500 -1.300H17.500V1.300H14.500Z" fill="#b7b5ba" stroke="none"/><circle cx="16" cy="0" r=".75" fill="#e6e7e8" stroke="none"/></g></svg>
<svg style="left:93px;top:820.7px" width="21" height="16"><path fill="#b7b5ba" fill-rule="evenodd" d="M1 8C3.300 4.200 6.300 1.800 10.050 1.800S16.800 4.200 19.100 8C16.800 11.800 13.800 14.100 10.050 14.100S3.300 11.800 1 8ZM14.350 8a4.300 4.300 0 1 0-8.600 0a4.300 4.300 0 1 0 8.600 0Z M13.050 8a3 3 0 1 0-6 0a3 3 0 1 0 6 0Z M10.200 6.800a1.100 1.100 0 1 0-2.200 0a1.100 1.100 0 1 0 2.200 0Z"/></svg>
<div class="a" style="left:32px;top:856.1px;width:5px;height:37.6px;background:#c8d3c1;border-radius:2.500px"></div>
<div class="t" style="left:120px;top:860px;padding:0.65px 0 0 0.16px;font-size:14px;font-weight:400;color:#261d30;letter-spacing:-0.891px;-webkit-text-stroke:.3px #261d30;">SLI 01</div>
<div class="t" style="left:120px;top:874px;padding:0.75px 0 0 0.10px;font-size:14px;font-weight:400;color:#261d30;letter-spacing:1.220px;-webkit-text-stroke:.3px #261d30;">25</div>
<div class="t" style="left:181px;top:860px;padding:0.65px 0 0 0.25px;font-size:14px;font-weight:400;color:#3d50ef;letter-spacing:-0.016px;-webkit-text-stroke:.25px #3d50ef;">Laurens Aingel</div>
<div class="t" style="left:290px;top:860px;padding:0.65px 0 0 0.89px;font-size:14px;font-weight:400;color:#261d30;letter-spacing:0.287px;-webkit-text-stroke:.3px #261d30;">Closed</div>
<svg style="left:72.900px;top:878.50px" width="1" height="1"><g transform="rotate(-44)" stroke="#b7b5ba" fill="none" stroke-width="1.800" stroke-linejoin="round"><path d="M.9 0L4.600 -1.800H16.700a1.300 1.300 0 0 1 1.300 1.300V.5a1.300 1.300 0 0 1-1.300 1.300H4.600Z"/><path d="M1 0L4.200 -1.500V1.500Z" fill="#b7b5ba" stroke-width="1"/><path d="M14 -1.800V1.800" stroke-width="1.600"/><path d="M14.500 -1.300H17.500V1.300H14.500Z" fill="#b7b5ba" stroke="none"/><circle cx="16" cy="0" r=".75" fill="#e6e7e8" stroke="none"/></g></svg>
<svg style="left:93px;top:863.6px" width="21" height="16"><path fill="#b7b5ba" fill-rule="evenodd" d="M1 8C3.300 4.200 6.300 1.800 10.050 1.800S16.800 4.200 19.100 8C16.800 11.800 13.800 14.100 10.050 14.100S3.300 11.800 1 8ZM14.350 8a4.300 4.300 0 1 0-8.600 0a4.300 4.300 0 1 0 8.600 0Z M13.050 8a3 3 0 1 0-6 0a3 3 0 1 0 6 0Z M10.200 6.800a1.100 1.100 0 1 0-2.200 0a1.100 1.100 0 1 0 2.200 0Z"/></svg>
<div class="a" style="left:351.4px;top:776.2px;width:736.6px;height:26px;background:#0f1b21;border-radius:4px"></div>
<div class="t" style="left:359px;top:782px;padding:0.37px 0 0 0.72px;font-size:13.5px;font-weight:400;color:#fff;letter-spacing:-0.030px;-webkit-text-stroke:.25px #fff;">GAR 01 25</div>
<div class="a" style="left:458.8px;top:819px;width:174.8px;height:26px;background:#3d6c80;border-radius:4px"></div>
<div class="t" style="left:466px;top:825px;padding:0.17px 0 0 0.87px;font-size:13.5px;font-weight:400;color:#fff;letter-spacing:-0.224px;-webkit-text-stroke:.25px #fff;">ZEP 01 25</div>
<div class="a" style="left:524.8px;top:862px;width:815.2px;height:26px;background:#c8d3c1;border-radius:4px"></div>
<div class="t" style="left:533px;top:868px;padding:0.17px 0 0 0.79px;font-size:13.5px;font-weight:400;color:#0f1b21;letter-spacing:-0.377px;-webkit-text-stroke:.25px #0f1b21;">SLI 01 25</div>
<div class="a" style="left:17px;top:875.5px;width:1303px;height:4px;background:#f3f2f5"></div>
</section>
</body></html>
